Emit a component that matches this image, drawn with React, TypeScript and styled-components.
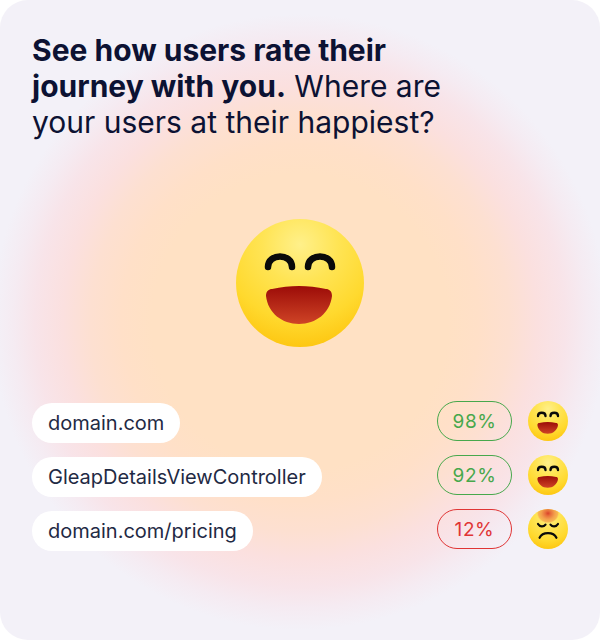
import React from 'react';
import styled, { createGlobalStyle } from 'styled-components';

const GlobalStyle = createGlobalStyle`
  html, body {
    margin: 0;
    padding: 0;
    background: #fff;
  }
`;

const Card = styled.div`
  width: 600px;
  height: 640px;
  box-sizing: border-box;
  padding: 32px 32px 0;
  border-radius: 28px;
  overflow: hidden;
  display: flex;
  flex-direction: column;
  font-family: Inter, "Liberation Sans", sans-serif;
  background: radial-gradient(circle 308px at 300px 322px,
    #ffe1c4 0%, #ffe1c4 48%, #ffe0c8 58%, #fde0d1 68%, #fbe0df 77%, #f8e4e9 86%, #f5ebf2 93%, #f3f1f8 100%),
    #f3f1f8;
`;

const Heading = styled.h1`
  margin: 0;
  font-size: 30px;
  line-height: 36px;
  font-weight: 400;
  color: #0c1233;
`;

const Strong = styled.strong`
  font-weight: 700;
`;

const Hero = styled.div`
  display: flex;
  justify-content: center;
  margin-top: 79px;
  height: 128px;
`;

const Rows = styled.div`
  margin-top: 54px;
  display: flex;
  flex-direction: column;
  gap: 14px;
`;

const Row = styled.div`
  display: flex;
  align-items: flex-start;
  height: 40px;
`;

const Label = styled.div`
  height: 40px;
  margin-top: 2px;
  padding: 0 16px;
  display: flex;
  align-items: center;
  background: #fff;
  border-radius: 20px;
  font-size: 20px;
  color: #1f2a44;
`;

const Score = styled.div<{ $tone: string }>`
  margin-left: auto;
  box-sizing: border-box;
  width: 75px;
  height: 40px;
  border-radius: 20px;
  border: 1px solid ${(p) => p.$tone};
  color: ${(p) => p.$tone};
  display: flex;
  align-items: center;
  justify-content: center;
  font-size: 19px;
  letter-spacing: 0.6px;
`;

const FaceSlot = styled.div`
  width: 40px;
  height: 40px;
  margin-left: 16px;
`;

const FaceDefs = ({ id }: { id: string }) => (
  <defs>
    <radialGradient id={`skin-${id}`} cx="0.5" cy="0.2" r="0.85">
      <stop offset="0" stopColor="#fff08a" />
      <stop offset="0.35" stopColor="#ffe454" />
      <stop offset="0.7" stopColor="#ffd92e" />
      <stop offset="1" stopColor="#fdc30c" />
    </radialGradient>
    <linearGradient id={`mouth-${id}`} x1="0" y1="0" x2="0" y2="1">
      <stop offset="0" stopColor="#9c0c08" />
      <stop offset="1" stopColor="#cf4426" />
    </linearGradient>
    <radialGradient id={`vein-${id}`} cx="0.5" cy="0.5" r="0.5">
      <stop offset="0" stopColor="#d9432a" />
      <stop offset="0.25" stopColor="#e8703c" />
      <stop offset="0.6" stopColor="#f3a04c" />
      <stop offset="0.85" stopColor="#f8b650" />
      <stop offset="1" stopColor="#fbc455" stopOpacity="0" />
    </radialGradient>
    <clipPath id={`clip-${id}`}>
      <circle cx="64" cy="64" r="64" />
    </clipPath>
  </defs>
);

const HappyFace = ({ id, size }: { id: string; size: number }) => (
  <svg width={size} height={size} viewBox="0 0 128 128">
    <FaceDefs id={id} />
    <circle cx="64" cy="64" r="64" fill={`url(#skin-${id})`} />
    <path
      d="M32 48 C32 34 56 34 56 48 M72 48 C72 34 96 34 96 48"
      fill="none"
      stroke="#0a0a0a"
      strokeWidth={size < 60 ? 7.5 : 6.5}
      strokeLinecap="round"
    />
    <path
      d="M36 70 C33 70 30 72 30 77 C32 94 46 105 63 105 C80 105 94 94 96 77 C96 72 93 70 90 70 C72 66 54 66 36 70 Z"
      fill={`url(#mouth-${id})`}
    />
  </svg>
);

const SadFace = ({ id, size }: { id: string; size: number }) => (
  <svg width={size} height={size} viewBox="0 0 128 128">
    <FaceDefs id={id} />
    <circle cx="64" cy="64" r="64" fill={`url(#skin-${id})`} />
    <g clipPath={`url(#clip-${id})`}>
      <ellipse cx="64" cy="14" rx="36" ry="32" fill={`url(#vein-${id})`} />
    </g>
    <path
      d="M32 48 C38 58 50 58 56 50 M72 50 C78 58 90 58 96 48 M37 92 C46 72 82 72 91 92"
      fill="none"
      stroke="#0a0a0a"
      strokeWidth="7"
      strokeLinecap="round"
    />
  </svg>
);

const rows = [
  { label: 'domain.com', score: '98%', tone: '#47a84c', happy: true },
  { label: 'GleapDetailsViewController', score: '92%', tone: '#47a84c', happy: true },
  { label: 'domain.com/pricing', score: '12%', tone: '#e03535', happy: false },
];

export default function App() {
  return (
    <>
      <GlobalStyle />
      <Card>
        <Heading>
          <Strong>See how users rate their</Strong>
          <br />
          <Strong>journey with you.</Strong> Where are
          <br />
          your users at their happiest?
        </Heading>
        <Hero>
          <HappyFace id="hero" size={128} />
        </Hero>
        <Rows>
          {rows.map((row, i) => (
            <Row key={row.label}>
              <Label>{row.label}</Label>
              <Score $tone={row.tone}>{row.score}</Score>
              <FaceSlot>
                {row.happy ? <HappyFace id={`r${i}`} size={40} /> : <SadFace id={`r${i}`} size={40} />}
              </FaceSlot>
            </Row>
          ))}
        </Rows>
      </Card>
    </>
  );
}
